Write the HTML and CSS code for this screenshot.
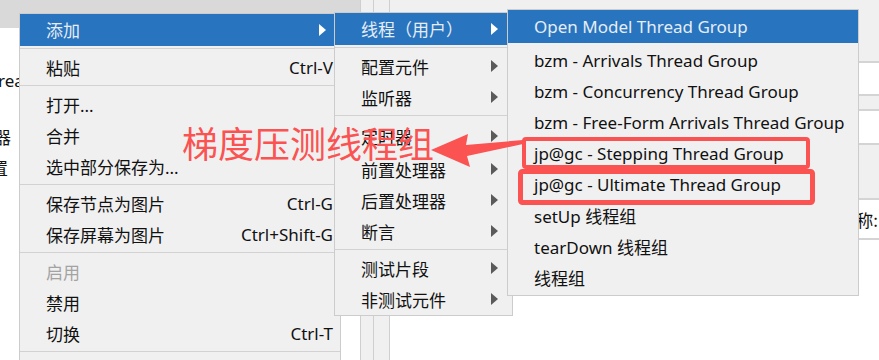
FILE: index.html
```html
<!DOCTYPE html>
<html lang="zh-CN">
<head>
    <meta charset="UTF-8">
    <meta name="viewport" content="width=device-width, initial-scale=1.0">
    <title>JMeter - 添加线程组</title>
    <link rel="stylesheet" href="styles.css">
</head>
<body>
    <div class="workspace">
        <!-- 左边的树 -->
        <div class="tree">
            <div class="tree-head"></div>
            <div class="tree-body">
                <p class="node n1">Thread Group</p>
                <p class="node n2">监听器</p>
                <p class="node n3">配置</p>
            </div>
        </div>
        <div class="splitter"><div class="split-a"></div><div class="split-b"></div></div>
        <!-- 右边的编辑区 -->
        <div class="editor">
            <div class="editor-head"></div>
            <div class="field"></div>
            <div class="gap"></div>
            <div class="field tall"></div>
            <div class="gap big"></div>
            <div class="field name-row"><span class="field-label">名称:</span></div>
            <div class="editor-rest"></div>
        </div>
    </div>

    <!-- 第一级菜单 -->
    <div class="menu menu1">
        <div class="item sub on"><span class="label">添加</span></div>
        <div class="sep"></div>
        <div class="item"><span class="label">粘贴</span><span class="key">Ctrl-V</span></div>
        <div class="sep"></div>
        <div class="item"><span class="label">打开...</span></div>
        <div class="item"><span class="label">合并</span></div>
        <div class="item"><span class="label">选中部分保存为...</span></div>
        <div class="sep"></div>
        <div class="item"><span class="label">保存节点为图片</span><span class="key">Ctrl-G</span></div>
        <div class="item"><span class="label">保存屏幕为图片</span><span class="key">Ctrl+Shift-G</span></div>
        <div class="sep"></div>
        <div class="item off"><span class="label">启用</span></div>
        <div class="item"><span class="label">禁用</span></div>
        <div class="item"><span class="label">切换</span><span class="key">Ctrl-T</span></div>
        <div class="sep"></div>
    </div>

    <!-- 添加 的子菜单 -->
    <div class="menu menu2">
        <div class="item sub on"><span class="label">线程（用户）</span></div>
        <div class="sep"></div>
        <div class="item sub"><span class="label">配置元件</span></div>
        <div class="item sub"><span class="label">监听器</span></div>
        <div class="sep"></div>
        <div class="item sub timer"><span class="label">定时器</span></div>
        <div class="item sub"><span class="label">前置处理器</span></div>
        <div class="item sub"><span class="label">后置处理器</span></div>
        <div class="item sub"><span class="label">断言</span></div>
        <div class="sep"></div>
        <div class="item sub"><span class="label">测试片段</span></div>
        <div class="item sub"><span class="label">非测试元件</span></div>
    </div>

    <!-- 线程组列表 -->
    <div class="menu menu3">
        <div class="item on first"><span class="label">Open Model Thread Group</span></div>
        <div class="item"><span class="label">bzm - Arrivals Thread Group</span></div>
        <div class="item"><span class="label">bzm - Concurrency Thread Group</span></div>
        <div class="item"><span class="label">bzm - Free-Form Arrivals Thread Group</span></div>
        <div class="item"><span class="label">jp@gc - Stepping Thread Group</span></div>
        <div class="item"><span class="label">jp@gc - Ultimate Thread Group</span></div>
        <div class="item"><span class="label">setUp 线程组</span></div>
        <div class="item"><span class="label">tearDown 线程组</span></div>
        <div class="item"><span class="label">线程组</span></div>
    </div>

    <!-- 标注 -->
    <div class="note">梯度压测线程组</div>
    <svg class="marks" width="879" height="360" viewBox="0 0 879 360">
        <polygon points="431,150 468,134 466,145 523,140 523,144 467,156 470,167" fill="#fb5252"/>
        <rect x="524" y="139" width="284" height="28" rx="2" fill="none" stroke="#fb5252" stroke-width="4"/>
        <rect x="520.5" y="171.5" width="292" height="31" rx="2" fill="none" stroke="#fb5252" stroke-width="5"/>
    </svg>
</body>
</html>
```

FILE: styles.css
```css
*{padding: 0;
margin: 0;
box-sizing: border-box;}

body{
    width: 879px;
    height: 360px;
    overflow: hidden;
    position: relative;
    background: #fff;
    font-family: "Noto Sans", "Noto Sans CJK SC", sans-serif;
    font-size: 17px;
    color: #111;
}

.workspace{
    display: flex;
    height: 360px;
}

/* 树 */
.tree{
    width: 360px;
    display: flex;
    flex-direction: column;
    overflow: hidden;
}
.tree-head{
    height: 28px;
    background: #d9d9d9;
}
.tree-body{
    flex: 1;
    background: #fff;
    padding-top: 37px;
}
.node{
    height: 31px;
    line-height: 31px;
    white-space: nowrap;
}
.n1{margin-left: -22px;}
.n2{margin-left: -40px; margin-top: 26px;}
.n3{margin-left: -26px;}

.splitter{
    width: 30px;
    display: flex;
}
.split-a{
    width: 14px;
    background: #f0f0f0;
    border-left: 1px solid #cfcfcf;
    border-right: 1px solid #cfcfcf;
}
.split-b{
    width: 16px;
    background: #f0f0f0;
    border-right: 1px solid #cfcfcf;
}

/* 编辑区 */
.editor{
    flex: 1;
    display: flex;
    flex-direction: column;
    background: #f0f0f0;
}
.editor-head{
    height: 61px;
}
.field{
    height: 35px;
    background: #fff;
    border-top: 2px solid #d4d4d4;
    border-bottom: 2px solid #d4d4d4;
}
.field.tall{
    height: 36px;
}
.gap{
    height: 13px;
}
.gap.big{
    height: 53px;
}
.name-row{
    height: 42px;
    display: flex;
    align-items: center;
    justify-content: flex-end;
    padding-right: 1px;
}
.field-label{
    font-family: "Noto Sans CJK SC", sans-serif;
    font-size: 17px;
}
.editor-rest{
    flex: 1;
    background: #fff;
}

/* 弹出菜单 */
.menu{
    position: absolute;
    background: #f0f0f0;
    border: 1px solid #cccccc;
}
.menu1{
    left: 19px;
    top: 13px;
    width: 322px;
    height: 360px;
    z-index: 1;
}
.menu2{
    left: 334px;
    top: 12px;
    width: 179px;
    height: 304px;
    z-index: 2;
}
.menu3{
    left: 507px;
    top: 9px;
    width: 352px;
    height: 287px;
    z-index: 3;
}

.item{
    height: 31px;
    display: flex;
    align-items: center;
    padding: 0 7px 1px 26px;
    white-space: nowrap;
}
.item.on{
    height: 32px;
    background: #2874be;
    color: #e6edf6;
}
.menu3 .item.first{
    height: 33px;
    margin-bottom: 2px;
}
.item.timer{
    height: 35px;
}
.item.off{
    color: #a3a3a3;
}
.label{
    flex: 1;
}
.key{
    margin-left: 20px;
}
.item.sub::after{
    content: "";
    width: 0;
    height: 0;
    margin-right: 7px;
    border-left: 7px solid #5a5a5a;
    border-top: 6px solid transparent;
    border-bottom: 6px solid transparent;
}
.item.sub.on::after{
    border-left-color: #fff;
}
.sep{
    height: 1px;
    margin: 2px 0 3px;
    background: #d2d2d2;
}

/* 红色标注 */
.note{
    position: absolute;
    left: 182px;
    top: 124px;
    z-index: 4;
    font-family: "Noto Sans CJK SC", sans-serif;
    font-size: 36px;
    line-height: 1;
    color: #fb5252;
    white-space: nowrap;
}
.marks{
    position: absolute;
    left: 0;
    top: 0;
    z-index: 4;
}
```
